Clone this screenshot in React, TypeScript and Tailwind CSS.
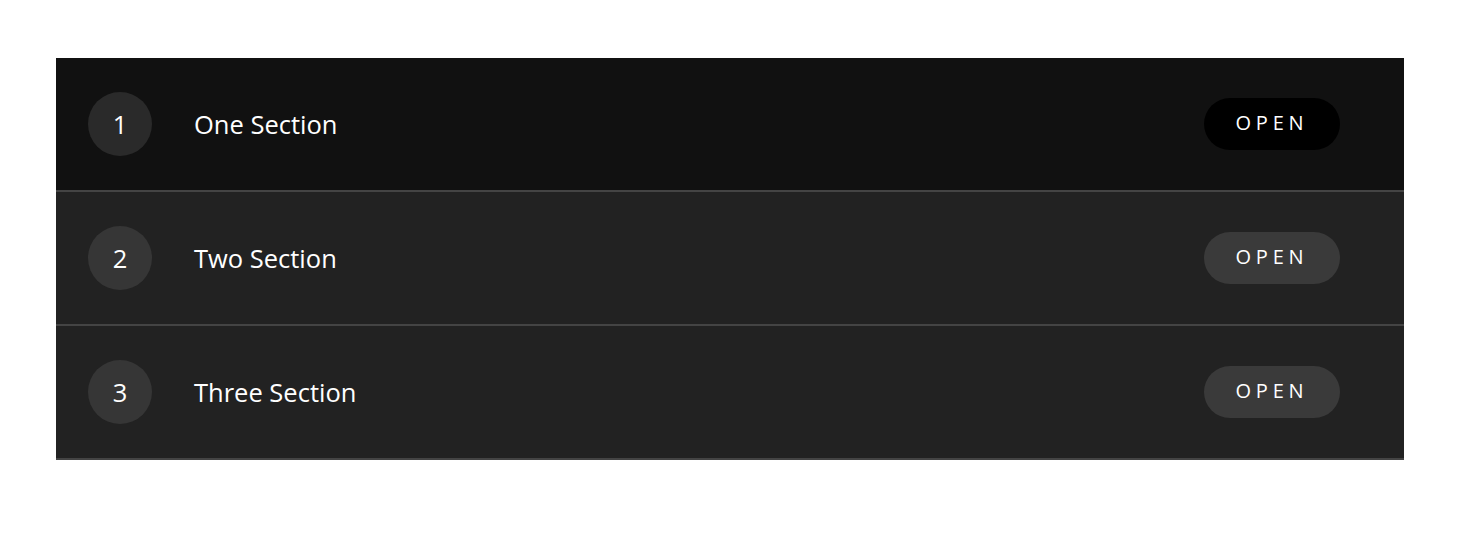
const sections = [
  { n: 1, title: "One Section", active: true },
  { n: 2, title: "Two Section", active: false },
  { n: 3, title: "Three Section", active: false },
];

export default function App() {
  return (
    <div className="min-h-screen bg-white pt-[58px] font-['Open_Sans',sans-serif]">
      <ul className="ml-[56px] w-[1348px]">
        {sections.map((s) =>
          s.active ? (
            <li
              key={s.n}
              className="flex h-[134px] items-center border-b-2 border-[#444444] bg-[#111111] pl-8 pr-16 text-white"
            >
              <span className="flex h-16 w-16 shrink-0 items-center justify-center rounded-full bg-[#2a2a2a] text-[25.5px]">
                {s.n}
              </span>
              <span className="ml-[42px] flex-1 text-[25.5px]">{s.title}</span>
              <button className="h-[52px] w-[136px] rounded-full bg-black pb-[2px] text-[20px] tracking-[0.24em]">
                OPEN
              </button>
            </li>
          ) : (
            <li
              key={s.n}
              className="flex h-[134px] items-center border-b-2 border-[#444444] bg-[#222222] pl-8 pr-16 text-white"
            >
              <span className="flex h-16 w-16 shrink-0 items-center justify-center rounded-full bg-[#363636] text-[25.5px]">
                {s.n}
              </span>
              <span className="ml-[42px] flex-1 text-[25.5px]">{s.title}</span>
              <button className="h-[52px] w-[136px] rounded-full bg-[#3a3a3a] pb-[2px] text-[20px] tracking-[0.24em]">
                OPEN
              </button>
            </li>
          )
        )}
      </ul>
    </div>
  );
}
